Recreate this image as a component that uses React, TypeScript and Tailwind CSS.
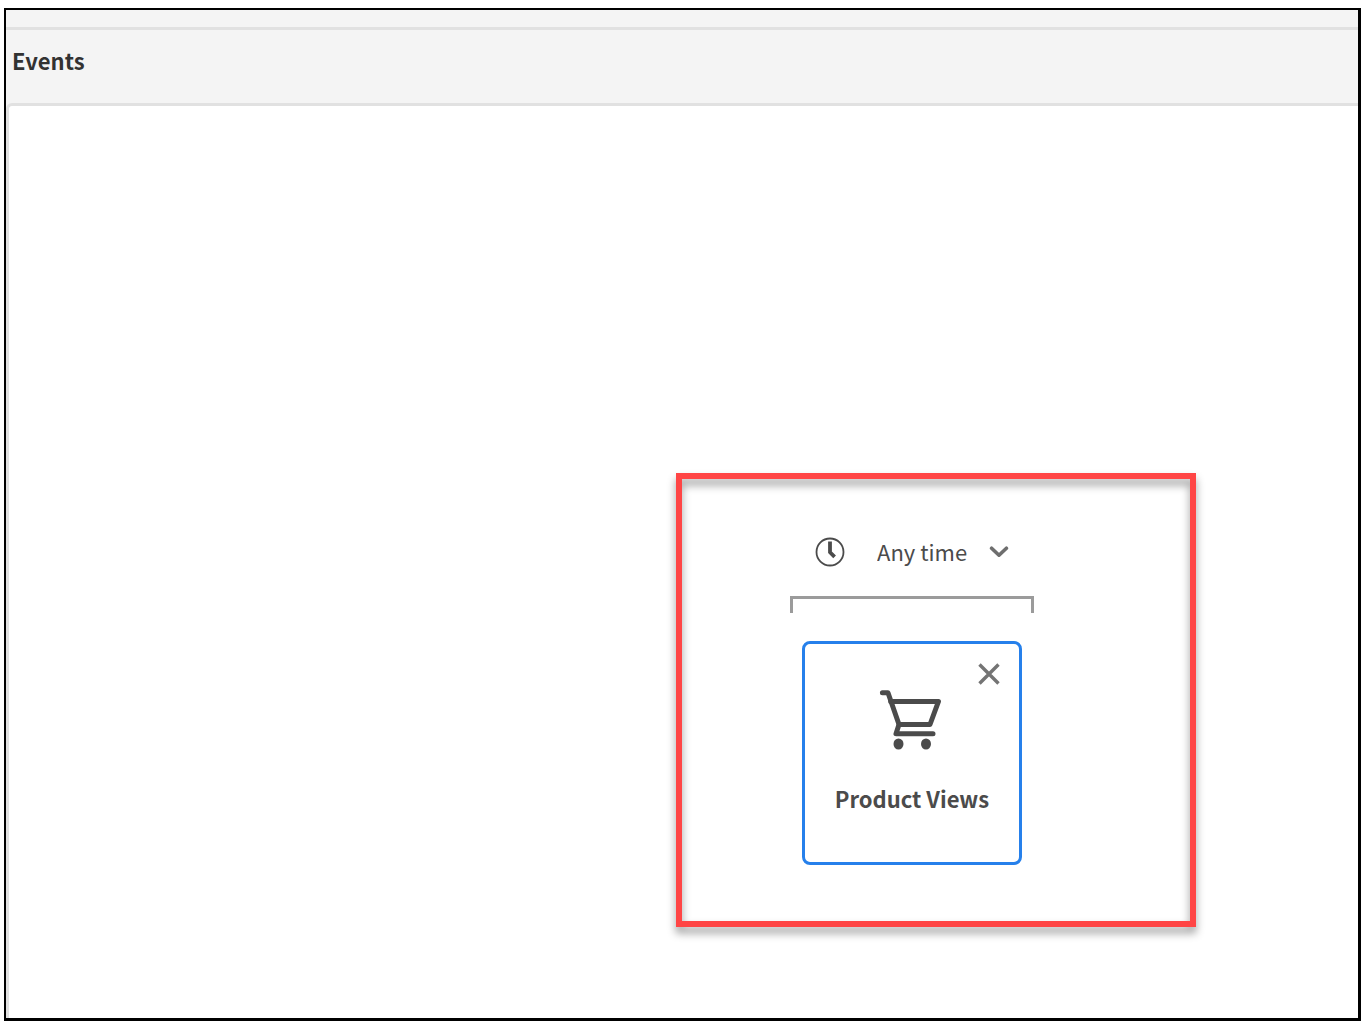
function ClockIcon() {
  return (
    <svg width="30" height="30" viewBox="0 0 30 30" fill="none" aria-hidden="true">
      <circle cx="15" cy="15" r="13.5" stroke="#4b4b4b" strokeWidth="1.8" />
      <path d="M15 4.5v10.800l4.600 4.600" stroke="#4b4b4b" strokeWidth="3.8" />
    </svg>
  );
}

function ChevronIcon() {
  return (
    <svg width="20" height="12" viewBox="0 0 20 12" fill="none" aria-hidden="true">
      <path d="M2.6 2.2 10 9.200l7.400-7" stroke="#6e6e6e" strokeWidth="3.6" strokeLinecap="round" strokeLinejoin="round" />
    </svg>
  );
}

function CloseIcon() {
  return (
    <svg width="22" height="22" viewBox="0 0 22 22" fill="none" aria-hidden="true">
      <path d="M1.5 1.5l19 19M20.5 1.5l-19 19" stroke="#747474" strokeWidth="3.4" />
    </svg>
  );
}

function CartIcon() {
  return (
    <svg width="66" height="60" viewBox="0 0 66 60" fill="none" aria-hidden="true">
      <g stroke="#4b4b4b" strokeWidth="5" strokeLinecap="round" strokeLinejoin="round">
        <path d="M3.4 2.8H9L20 34.5 17 43.7h37" />
        <path d="M11.7 11.4H59.500L51 34.5H20" />
      </g>
      <ellipse cx="19.5" cy="54" rx="5" ry="5.5" fill="#4b4b4b" />
      <ellipse cx="47" cy="54" rx="5" ry="5.5" fill="#4b4b4b" />
    </svg>
  );
}

export default function App() {
  return (
    <div className="flex min-h-screen flex-col bg-white pt-2 pr-0.5 pb-[3px] pl-1 font-['Noto_Sans_CJK_SC','Noto_Sans',sans-serif] text-[22px] text-[#4b4b4b]">
      <div className="flex grow flex-col border-2 border-r-3 border-b-3 border-black bg-[#f4f4f4]">
        <div className="h-[17px]" />
        <header className="border-t-3 border-[#e1e1e1] pt-[14px] pb-[27px] pl-1.5">
          <h1 className="leading-8 font-bold text-[#323232]">Events</h1>
        </header>
        <main className="flex grow items-start justify-end rounded-tl-md border-t-3 border-l-3 border-[#e1e1e1] bg-white pt-[367px] pr-[162px]">
          <section className="relative flex w-[520px] flex-col items-center pt-[59px] pr-12 pb-[62px]">
            <div className="pointer-events-none absolute inset-0 border-6 border-[#ff4545] drop-shadow-[0_6px_4px_rgba(0,0,0,0.4)]" />
            <div className="flex h-10 items-center">
              <ClockIcon />
              <label className="relative ml-8 flex items-center">
                <select aria-label="Time range" className="w-[132px] appearance-none bg-transparent pb-0.5 leading-8">
                  <option>Any time</option>
                </select>
                <span className="pointer-events-none absolute right-0">
                  <ChevronIcon />
                </span>
              </label>
            </div>
            <div className="mt-6 h-[17px] w-[244px] border-x-3 border-t-3 border-[#9b9b9b]" />
            <article className="relative mt-7 flex w-[220px] flex-col items-center rounded-lg border-3 border-[#2680eb] pt-[46px] pb-12">
              <button type="button" aria-label="Remove Product Views" className="absolute top-[19px] right-[19px]">
                <CloseIcon />
              </button>
              <CartIcon />
              <h2 className="mt-8 leading-8 font-bold">Product Views</h2>
            </article>
          </section>
        </main>
      </div>
    </div>
  );
}
